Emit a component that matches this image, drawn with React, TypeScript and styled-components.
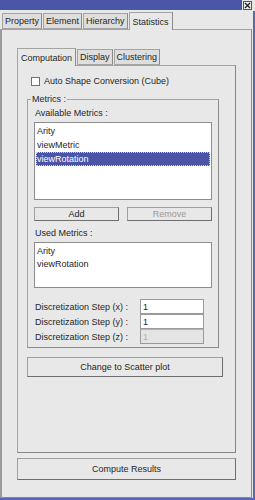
import React from 'react';
import styled, { createGlobalStyle } from 'styled-components';

const Global = createGlobalStyle`
  html, body {
    margin: 0;
    padding: 0;
    background: #e8e8e8;
  }
  * {
    box-sizing: border-box;
  }
`;

const Window = styled.div`
  width: 255px;
  height: 500px;
  display: flex;
  flex-direction: column;
  background: #e8e8e8;
  font-family: 'Liberation Sans', Arial, sans-serif;
  font-size: 9px;
  color: #262626;
  border-bottom: 2px solid #5866b8;
  overflow: hidden;
`;

const TitleBar = styled.div`
  height: 11px;
  display: flex;
  align-items: flex-start;
  gap: 1px;
`;

const TitleFill = styled.div`
  width: 242px;
  height: 10px;
  background: #4a56a6;
`;

const CloseButton = styled.div`
  width: 9px;
  height: 9px;
  margin-top: 1px;
  border: 1px solid #555;
  background: #f0f0f0;
  display: flex;
  align-items: center;
  justify-content: center;
`;

const Body = styled.div`
  flex: 1;
  display: flex;
  flex-direction: column;
  border-right: 2px solid #5866b8;
  padding-right: 1px;
`;

const TabBar = styled.div<{ $indent: number }>`
  display: flex;
  align-items: flex-end;
  padding-left: ${(p) => p.$indent}px;
  height: 17px;
  margin-top: ${(p) => (p.$indent ? 1 : 0)}px;
`;

const Tab = styled.div<{ $active?: boolean }>`
  height: ${(p) => (p.$active ? 18 : 16)}px;
  padding: 0 ${(p) => (p.$active ? 3 : 2)}px;
  display: flex;
  align-items: center;
  border: 1px solid #a4a4a4;
  border-bottom: ${(p) => (p.$active ? 'none' : '1px solid #a4a4a4')};
  border-right-color: #8a8a8a;
  background: ${(p) => (p.$active ? '#e8e8e8' : '#dedede')};
  margin-right: 1px;
  margin-bottom: ${(p) => (p.$active ? -1 : 0)}px;
  position: relative;
  z-index: ${(p) => (p.$active ? 1 : 0)};
`;

const OuterPanel = styled.div`
  flex: 1;
  border: 1px solid #a4a4a4;
  border-left: 2px solid #9a9a9a;
  border-right-color: #8a8a8a;
  border-bottom-color: #8a8a8a;
  padding: 18px 0 0 15px;
  display: flex;
  flex-direction: column;
`;

const InnerPanel = styled.div`
  width: 219px;
  height: 388px;
  border: 1px solid #a4a4a4;
  border-right-color: #858585;
  border-bottom-color: #858585;
  padding: 9px 0 0 9px;
  display: flex;
  flex-direction: column;
`;

const CheckRow = styled.label`
  display: flex;
  align-items: center;
  gap: 4px;
  padding-left: 4px;
  height: 12px;
`;

const CheckBox = styled.span`
  width: 9px;
  height: 9px;
  background: #fff;
  border: 1px solid #707070;
`;

const GroupBox = styled.fieldset`
  width: 192px;
  height: 254px;
  margin: 7px 0 0 0;
  padding: 4px 0 0 6px;
  border: 1px solid #a4a4a4;
  border-right-color: #8a8a8a;
  border-bottom-color: #8a8a8a;
  display: flex;
  flex-direction: column;
  min-width: 0;
`;

const Legend = styled.legend`
  padding: 0 1px;
  margin-left: -3px;
  line-height: 10px;
`;

const FieldLabel = styled.div<{ $top: number }>`
  margin-top: ${(p) => p.$top}px;
  height: 11px;
  line-height: 11px;
  padding-left: 1px;
`;

const ListBox = styled.div<{ $height: number; $row: number }>`
  width: 178px;
  height: ${(p) => p.$height}px;
  margin-top: 3px;
  background: #fff;
  border: 1px solid #8c8c8c;
  padding: 1px 1px 0 1px;
  display: flex;
  flex-direction: column;
  & > div {
    height: ${(p) => p.$row}px;
  }
`;

const ListItem = styled.div<{ $selected?: boolean }>`
  display: flex;
  align-items: center;
  padding-left: 1px;
  background: ${(p) => (p.$selected ? '#4a55a7' : 'transparent')};
  color: ${(p) => (p.$selected ? '#fff' : '#262626')};
  outline: ${(p) => (p.$selected ? '1px dotted #d0d0d0' : 'none')};
  outline-offset: -1px;
`;

const ButtonRow = styled.div`
  display: flex;
  gap: 8px;
  width: 178px;
  margin-top: 7px;
`;

const Button = styled.div<{ $disabled?: boolean; $height: number }>`
  flex: 1;
  height: ${(p) => p.$height}px;
  display: flex;
  align-items: center;
  justify-content: center;
  background: #e8e8e8;
  border: 1px solid #a0a0a0;
  border-right-color: #6e6e6e;
  border-bottom-color: #6e6e6e;
  color: ${(p) => (p.$disabled ? '#9a9a9a' : '#262626')};
`;

const StepGrid = styled.div`
  display: grid;
  grid-template-columns: 106px 64px;
  margin-top: 11px;
`;

const StepLabel = styled.div`
  height: 15px;
  display: flex;
  align-items: center;
  padding-left: 1px;
`;

const StepInput = styled.div<{ $disabled?: boolean }>`
  height: 15px;
  display: flex;
  align-items: center;
  padding-left: 2px;
  background: ${(p) => (p.$disabled ? '#e4e4e4' : '#fff')};
  border: 1px solid #9a9a9a;
  border-top-color: ${(p) => (p.$disabled ? '#b4b4b4' : '#9a9a9a')};
  color: ${(p) => (p.$disabled ? '#b0b0b0' : '#262626')};
`;

const WideButton = styled(Button)<{ $width: number }>`
  flex: none;
  width: ${(p) => p.$width}px;
`;

const Section = styled.div<{ $top: number }>`
  margin-top: ${(p) => p.$top}px;
  display: flex;
`;

const available = ['Arity', 'viewMetric', 'viewRotation'];
const used = ['Arity', 'viewRotation'];
const steps = [
  { axis: 'x', value: '1' },
  { axis: 'y', value: '1' },
  { axis: 'z', value: '1', disabled: true },
];

const App = () => {
  return (
    <>
      <Global />
      <Window>
        <TitleBar>
          <TitleFill />
          <CloseButton>
            <svg width="7" height="7" viewBox="0 0 7 7">
              <path d="M1 1L6 6M6 1L1 6" stroke="#222" strokeWidth="1.3" />
            </svg>
          </CloseButton>
        </TitleBar>
        <Body>
          <TabBar $indent={2}>
            <Tab>Property</Tab>
            <Tab>Element</Tab>
            <Tab>Hierarchy</Tab>
            <Tab $active>Statistics</Tab>
          </TabBar>
          <OuterPanel>
            <TabBar $indent={0}>
              <Tab $active>Computation</Tab>
              <Tab>Display</Tab>
              <Tab>Clustering</Tab>
            </TabBar>
            <InnerPanel>
              <CheckRow>
                <CheckBox />
                Auto Shape Conversion (Cube)
              </CheckRow>
              <GroupBox>
                <Legend>Metrics :</Legend>
                <FieldLabel $top={0}>Available Metrics :</FieldLabel>
                <ListBox $height={78} $row={14}>
                  {available.map((m) => (
                    <ListItem key={m} $selected={m === 'viewRotation'}>
                      {m}
                    </ListItem>
                  ))}
                </ListBox>
                <ButtonRow>
                  <Button $height={14}>Add</Button>
                  <Button $height={14} $disabled>
                    Remove
                  </Button>
                </ButtonRow>
                <FieldLabel $top={7}>Used Metrics :</FieldLabel>
                <ListBox $height={46} $row={13}>
                  {used.map((m) => (
                    <ListItem key={m}>{m}</ListItem>
                  ))}
                </ListBox>
                <StepGrid>
                  {steps.map((s) => (
                    <React.Fragment key={s.axis}>
                      <StepLabel>Discretization Step ({s.axis}) :</StepLabel>
                      <StepInput $disabled={s.disabled}>{s.value}</StepInput>
                    </React.Fragment>
                  ))}
                </StepGrid>
              </GroupBox>
              <Section $top={9}>
                <WideButton $width={196} $height={20}>
                  Change to Scatter plot
                </WideButton>
              </Section>
            </InnerPanel>
            <Section $top={5}>
              <WideButton $width={219} $height={22}>
                Compute Results
              </WideButton>
            </Section>
          </OuterPanel>
        </Body>
      </Window>
    </>
  );
};

export default App;
